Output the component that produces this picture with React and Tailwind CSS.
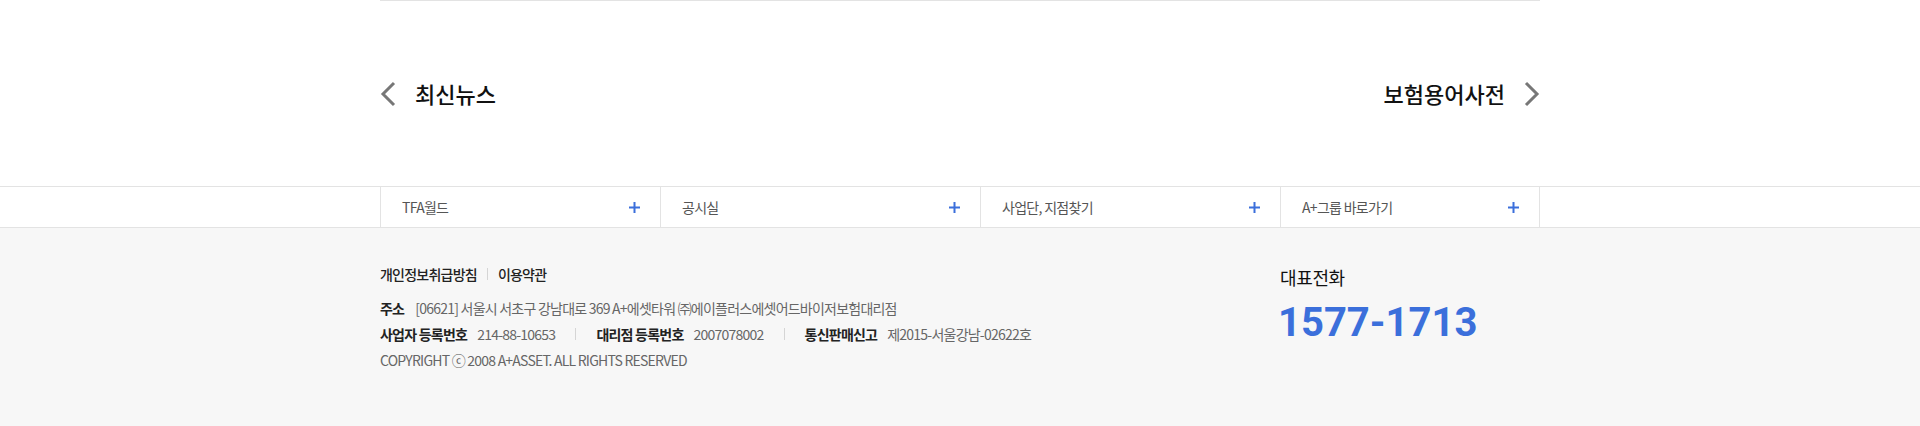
import React from 'react';

const menus = [
  { label: 'TFA월드', w: 'w-[280px]' },
  { label: '공시실', w: 'w-[320px]' },
  { label: '사업단, 지점찾기', w: 'w-[300px]' },
  { label: 'A+그룹 바로가기', w: 'w-[260px]' },
];

function Chevron({ dir }) {
  return (
    <svg width="16" height="26" viewBox="0 0 16 26" fill="none">
      <polyline
        points={dir === 'left' ? '14,2 3,13 14,24' : '2,2 13,13 2,24'}
        stroke="#777"
        strokeWidth="3"
        strokeLinejoin="miter"
      />
    </svg>
  );
}

function Plus() {
  return (
    <svg width="11" height="11" viewBox="0 0 11 11">
      <rect x="0" y="4.5" width="11" height="2" fill="#3b6fdb" />
      <rect x="4.5" y="0" width="2" height="11" fill="#3b6fdb" />
    </svg>
  );
}

function Sep({ className }) {
  return <span className={`inline-block h-[12px] w-px bg-[#d5d5d5] ${className}`} />;
}

export default function App() {
  return (
    <div className="min-h-[426px] bg-white font-['Noto_Sans_CJK_KR',sans-serif] text-[#111]">
      {/* prev / next */}
      <div className="mx-auto w-[1160px] border-t border-[#e3e3e3]">
        <div className="flex h-[185px] items-center justify-between">
          <a className="flex items-center gap-[19px]">
            <Chevron dir="left" />
            <span className="text-[22px] font-medium tracking-[0em]">최신뉴스</span>
          </a>
          <a className="flex items-center gap-[19px]">
            <span className="text-[22px] font-medium tracking-[0em]">보험용어사전</span>
            <Chevron dir="right" />
          </a>
        </div>
      </div>

      {/* quick menu */}
      <div className="border-y border-[#e3e3e3] bg-white">
        <div className="mx-auto flex w-[1160px]">
          {menus.map((m, i) => (
            <div
              key={m.label}
              className={`flex h-[40px] items-center justify-between border-l border-[#e3e3e3] pl-[21px] pr-[20px] ${m.w} ${i === menus.length - 1 ? 'border-r' : ''}`}
            >
              <span className="text-[14px] tracking-[-0.05em] text-[#555]">{m.label}</span>
              <Plus />
            </div>
          ))}
        </div>
      </div>

      {/* footer */}
      <footer className="h-[199px] bg-[#f7f7f7]">
        <div className="mx-auto flex w-[1160px] pt-[36px]">
          <div className="flex-1 text-[14px] tracking-[-0.055em]">
            <div className="flex h-[20px] items-center font-medium text-[#222]">
              <span>개인정보취급방침</span>
              <Sep className="mx-[10px]" />
              <span>이용약관</span>
            </div>
            <div className="mt-[11px] leading-[26px] text-[#666]">
              <div className="flex items-center">
                <b className="mr-[11px] font-bold text-[#222]">주소</b>
                <span>[06621] 서울시 서초구 강남대로 369 A+에셋타워 ㈜에이플러스에셋어드바이저보험대리점</span>
              </div>
              <div className="flex items-center">
                <b className="mr-[10px] font-bold text-[#222]">사업자 등록번호</b>
                <span>214-88-10653</span>
                <Sep className="mx-[20px]" />
                <b className="mr-[10px] font-bold text-[#222]">대리점 등록번호</b>
                <span>2007078002</span>
                <Sep className="mx-[20px]" />
                <b className="mr-[10px] font-bold text-[#222]">통신판매신고</b>
                <span>제2015-서울강남-02622호</span>
              </div>
              <div>COPYRIGHT ⓒ 2008 A+ASSET. ALL RIGHTS RESERVED</div>
            </div>
          </div>
          <div className="w-[260px]">
            <div className="text-[18px] leading-[26px] tracking-[-0.02em] text-[#111]">대표전화</div>
            <div className="-ml-[2px] mt-[9px] font-['Roboto',sans-serif] text-[40px] font-bold leading-[48px] text-[#3b6fdb]">
              1577-1713
            </div>
          </div>
        </div>
      </footer>
    </div>
  );
}
